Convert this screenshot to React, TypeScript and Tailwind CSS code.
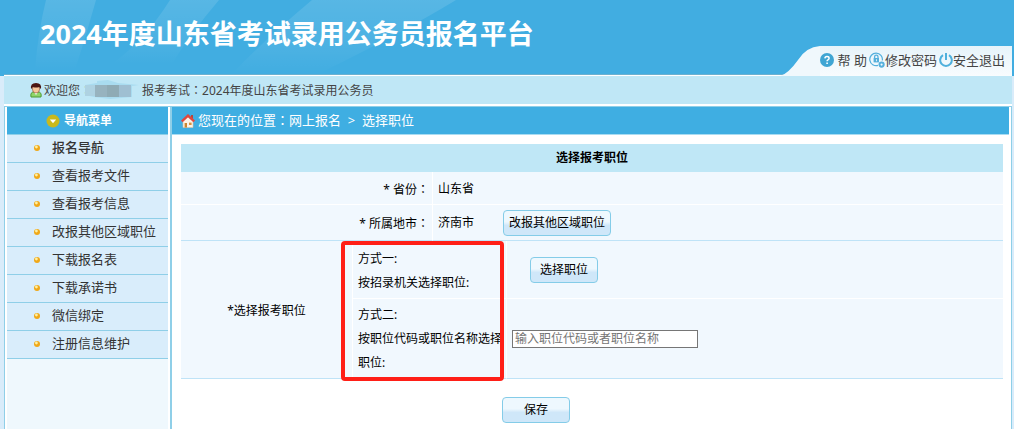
import React from "react";

const navItems = [
  "报名导航",
  "查看报考文件",
  "查看报考信息",
  "改报其他区域职位",
  "下载报名表",
  "下载承诺书",
  "微信绑定",
  "注册信息维护",
];

function Colon() {
  return <span className="font-['Noto_Sans_CJK_TC',sans-serif]">：</span>;
}

function HeaderRays() {
  return (
    <svg className="absolute inset-0 h-full w-[480px]" viewBox="0 0 480 76" preserveAspectRatio="none" aria-hidden="true">
      <defs>
        <linearGradient id="ray" x1="0" y1="0" x2="0" y2="1">
          <stop offset="0" stopColor="#ffffff" stopOpacity="0.12" />
          <stop offset="0.7" stopColor="#ffffff" stopOpacity="0.05" />
          <stop offset="1" stopColor="#ffffff" stopOpacity="0" />
        </linearGradient>
      </defs>
      <path d="M46 0H96Q86 36 75 70H35Q38 32 46 0Z" fill="url(#ray)" />
      <path d="M170 0H219Q190 34 172 64H112Q145 40 170 0Z" fill="url(#ray)" />
      <path d="M312 0H456Q400 34 318 74H232Q262 42 312 0Z" fill="url(#ray)" />
    </svg>
  );
}

function UserIcon() {
  return (
    <svg className="h-[15px] w-[12px]" viewBox="0 0 12 15" aria-hidden="true">
      <path d="M1 14Q0 9 4 9H8Q12 9 11 14Z" fill="#8fd46a" stroke="#4b9a34" />
      <path d="M4 9L6 12L8 9Z" fill="#fff" />
      <ellipse cx="6" cy="6" rx="3.6" ry="4" fill="#f6c79b" stroke="#8a4a2a" strokeWidth="0.6" />
      <path d="M1 6Q0 0 6 0Q12 0 11 6L9 4Q6 5 3 4Z" fill="#4a1512" />
    </svg>
  );
}

function RedactedName() {
  return (
    <svg className="h-[20px] w-[56px]" viewBox="0 0 56 20" aria-hidden="true">
      <path d="M1 5L13 3L13 1L24 0L34 3L55 5L48 6V17L26 19L10 17L1 15Z" fill="#a9dcf0" />
      <path d="M1 5H11V16H1Z" fill="#aed2e2" />
      <path d="M11 5H23V17H11Z" fill="#97b3bf" />
      <path d="M23 5H35V17H23Z" fill="#8fabb5" />
      <path d="M35 5H47V17H35Z" fill="#9fbfd2" />
    </svg>
  );
}

function HelpIcon() {
  return (
    <svg className="size-[14px]" viewBox="0 0 14 14" aria-hidden="true">
      <circle cx="7" cy="7" r="7" fill="#3fa5d3" />
      <path d="M4.9 5.4Q5 3.6 7 3.6Q9.1 3.6 9.1 5.3Q9.1 6.4 8 6.9Q7.1 7.4 7.1 8.3" fill="none" stroke="#fff" strokeWidth="1.5" />
      <path d="M6.3 9.4H7.9V10.9H6.3Z" fill="#fff" />
    </svg>
  );
}

function LockIcon() {
  return (
    <svg className="size-[16px]" viewBox="0 0 16 16" fill="none" stroke="#55b0dc" aria-hidden="true">
      <path d="M9 13.4A6.3 6.3 0 1 1 13.3 8.5" strokeWidth="1.2" />
      <path d="M5.6 6V4.8A1.7 1.7 0 0 1 9 4.8V6" strokeWidth="1.3" />
      <path d="M4.6 6H10V10.4H4.6Z" fill="#55b0dc" stroke="none" />
      <path d="M7 7.3H7.8V9.2H7Z" fill="#fff" stroke="none" />
      <circle cx="12.6" cy="12.6" r="2.1" strokeWidth="2" />
    </svg>
  );
}

function PowerIcon() {
  return (
    <svg className="size-[14px]" viewBox="0 0 14 14" fill="none" stroke="#4fb0dc" strokeWidth="2" aria-hidden="true">
      <path d="M4 2.2A5.8 5.8 0 1 0 10 2.2" />
      <path d="M7 0V7" />
    </svg>
  );
}

function HomeIcon() {
  return (
    <svg className="size-[14px]" viewBox="0 0 14 14" aria-hidden="true">
      <path d="M10 1H12V5H10Z" fill="#b8473a" />
      <path d="M2 7L7 2.5L12 7V13.5H2Z" fill="#fbf3e6" stroke="#d8c5a8" strokeWidth="0.6" />
      <path d="M0.8 7.4L7 1.6L13.2 7.4" fill="none" stroke="#e0483f" strokeWidth="2.4" />
      <path d="M3.6 9H6V13.5H3.6Z" fill="#c98632" />
      <path d="M8 8.6H10.6V11H8Z" fill="#d98f3c" />
    </svg>
  );
}

function DownIcon() {
  return (
    <svg className="size-[14px]" viewBox="0 0 14 14" aria-hidden="true">
      <circle cx="7" cy="7" r="6.5" fill="#c9b91c" />
      <path d="M3.8 5.4H10.2L7 9.2Z" fill="#fff" />
    </svg>
  );
}

function Bullet() {
  return (
    <svg className="size-[6px]" viewBox="0 0 6 6" aria-hidden="true">
      <circle cx="3" cy="3" r="3" fill="#f0a818" />
      <circle cx="2.4" cy="2" r="1.4" fill="#fff0a0" />
    </svg>
  );
}

function FormButton({ className, children }: { className: string; children: React.ReactNode }) {
  return (
    <button
      type="button"
      className={`h-[26px] rounded-[4px] border border-[#84cce8] bg-linear-to-b from-[#eef8fe] from-45% to-[#cfe7f9] to-60% text-center text-[12px] leading-[24px] ${className}`}
    >
      {children}
    </button>
  );
}

export default function App() {
  return (
    <div className="flex min-h-screen flex-col bg-[#d9ecfa] font-['Noto_Sans','Noto_Sans_CJK_SC',sans-serif] text-[12px] text-black">
      <header className="relative flex h-[76px] shrink-0 items-end justify-between bg-[#41ade1]">
        <HeaderRays />
        <h1 className="relative flex h-[76px] items-center pb-[8px] pl-[40px] text-[27px] leading-[36px] font-bold text-white">
          2024年度山东省考试录用公务员报名平台
        </h1>
        <div className="absolute inset-x-0 bottom-0 mr-[2px] ml-[4px] h-[2px] border-t border-[#6cb0cf] bg-white" />
        <nav className="relative mr-[2px] flex h-[30px] text-[13px] leading-[24px] whitespace-nowrap text-[#444]">
          <svg className="h-full w-[40px]" viewBox="0 0 40 30" preserveAspectRatio="none" aria-hidden="true">
            <path d="M0 30Q8 28 18 14Q26 1 40 0V30Z" fill="#f0f8fc" />
          </svg>
          <div className="flex items-center bg-linear-to-b from-[#e6f3fa] to-[#f8fcfe] pr-[7px] pb-[3px]">
            <a href="#help" className="flex items-center gap-[4px]">
              <HelpIcon />帮 助
            </a>
            <a href="#password" className="ml-[2px] flex items-center">
              <LockIcon />修改密码
            </a>
            <a href="#logout" className="ml-[2px] flex items-center">
              <PowerIcon />安全退出
            </a>
          </div>
        </nav>
      </header>

      <div className="mr-[2px] ml-[4px] flex grow flex-col bg-white">
        <div className="flex h-[28px] items-center bg-[#bfe7f6] pl-[26px] text-[#444]">
          <UserIcon />
          <span className="ml-[2px]">
            欢迎您<Colon />
          </span>
          <div className="-ml-2">
            <RedactedName />
          </div>
          <span className="ml-[2px]">
            报考考试<Colon />2024年度山东省考试录用公务员
          </span>
        </div>

        <div className="mt-[2px] flex grow border-x border-t border-[#8fcfe8]">
          <aside className="w-[167px] shrink-0 border-r-2 border-[#8fcfe8] pr-[2px] pl-[2px]">
            <div className="flex h-full flex-col bg-[#eff8fd] text-[13px]">
              <h2 className="flex h-[28px] items-center gap-[4px] border-b border-[#8fcfe8] bg-[#3faee2] pl-[39px] text-[12px] font-bold text-white">
                <DownIcon />
                导航菜单
              </h2>
              <ul>
                {navItems.map((item, i) => (
                  <li key={item} className="h-[28px] border-b border-[#8fcfe8] bg-[#d9edfb]">
                    <a
                      href="#menu"
                      className={`flex h-full items-center gap-[12px] pb-[2px] pl-[27px] text-[#333] ${i === 0 ? "font-medium" : ""}`}
                    >
                      <Bullet />
                      {item}
                    </a>
                  </li>
                ))}
              </ul>
            </div>
          </aside>

          <main className="min-w-0 grow pr-[2px]">
            <div className="flex h-[28px] items-center gap-[3px] border-b border-[#a9dcf2] bg-[#3faee2] pl-[9px] text-[13px] whitespace-pre text-white">
              <HomeIcon />
              <span>
                您现在的位置<Colon />网上报名{"  "}&gt;{"  "}选择职位
              </span>
            </div>

            <form className="pt-[9px] pr-[6px] pl-[9px]" onSubmit={(e) => e.preventDefault()}>
              <div className="relative">
                <table className="w-full table-fixed border-separate border-spacing-0 bg-[#f1f8fe]">
                  <colgroup>
                    <col className="w-[171px]" />
                    <col className="w-[80px]" />
                    <col className="w-[74px]" />
                    <col />
                  </colgroup>
                  <thead>
                    <tr>
                      <th colSpan={4} className="h-[28px] bg-[#bfe7f6] p-0 text-center font-bold">
                        选择报考职位
                      </th>
                    </tr>
                  </thead>
                  <tbody>
                    <tr className="h-[33px]">
                      <th colSpan={2} className="border-b border-white p-0 pt-[2px] pr-[3px] text-right font-normal">
                        * 省份<Colon />
                      </th>
                      <td colSpan={2} className="border-b border-l border-white p-0 pt-[2px] pl-[5px]">
                        山东省
                      </td>
                    </tr>
                    <tr className="h-[36px]">
                      <th colSpan={2} className="border-b border-[#bfe3f7] p-0 pt-[2px] pr-[3px] text-right font-normal">
                        * 所属地市<Colon />
                      </th>
                      <td colSpan={2} className="border-b border-l border-b-[#bfe3f7] border-l-white p-0 pt-[1px] pl-[5px]">
                        <div className="flex items-center gap-[29px]">
                          济南市
                          <FormButton className="w-[108px]">改报其他区域职位</FormButton>
                        </div>
                      </td>
                    </tr>
                    <tr className="h-[58px]">
                      <th rowSpan={2} className="border-b border-[#bfe3f7] p-0 pt-[2px] text-center font-normal">
                        <label htmlFor="position">*选择报考职位</label>
                      </th>
                      <td colSpan={2} className="border-b border-l border-white p-0 pt-[2px] pl-[5px] leading-[24px]">
                        方式一:
                        <br />
                        按招录机关选择职位:
                      </td>
                      <td className="border-b border-l border-white p-0 pl-[23px]">
                        <FormButton className="w-[68px]">选择职位</FormButton>
                      </td>
                    </tr>
                    <tr className="h-[80px]">
                      <td
                        colSpan={2}
                        className="border-b border-l border-b-[#bfe3f7] border-l-white p-0 pt-[1px] pl-[5px] leading-[24px]"
                      >
                        方式二:
                        <br />
                        按职位代码或职位名称选择
                        <br />
                        职位:
                      </td>
                      <td className="border-b border-l border-b-[#bfe3f7] border-l-white p-0 pl-[5px]">
                        <input
                          id="position"
                          type="text"
                          placeholder="输入职位代码或者职位名称"
                          className="block h-[18px] w-[186px] border border-[#767676] bg-white px-[2px] leading-[16px] placeholder:text-[#757575]"
                        />
                      </td>
                    </tr>
                  </tbody>
                </table>
                <div className="pointer-events-none absolute bottom-[-2px] left-[160px] h-[140px] w-[163px] rounded-[4px] border-4 border-[#ff1f17]" />
              </div>
              <div className="mt-[18px] pl-[321px]">
                <FormButton className="w-[68px]">保存</FormButton>
              </div>
            </form>
          </main>
        </div>
      </div>
    </div>
  );
}
